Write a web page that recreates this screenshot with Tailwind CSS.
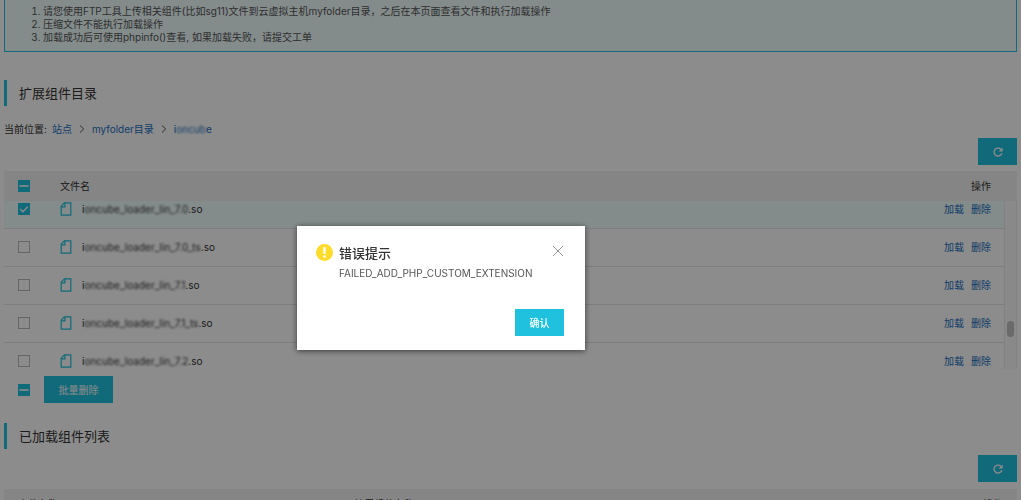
<!DOCTYPE html>
<html lang="zh-CN">
<head>
<meta charset="utf-8">
<meta name="viewport" content="width=device-width, initial-scale=1">
<title>扩展组件目录</title>
<script src="https://cdn.jsdelivr.net/npm/@tailwindcss/browser@4"></script>
</head>
<body class="h-screen overflow-hidden bg-white font-['Inter','Noto_Sans_CJK_SC',sans-serif] text-[10px] leading-[14px] text-[#333]">
<svg class="hidden" aria-hidden="true">
  <symbol id="file" viewBox="0 0 12 14"><path d="M4.4 .8H10.8v12.4H1.2V4.2z" fill="none" stroke="currentColor" stroke-width="1.2"/><path d="M4.9 .8v4H1.2" fill="none" stroke="currentColor" stroke-width="1.2"/></symbol>
  <symbol id="refresh" viewBox="0 0 10 10"><path d="M8.9 6.2A4 4 0 1 1 7.9 2.2" fill="none" stroke="currentColor" stroke-width="1.3"/><path d="M9.6 .6v4H5.6z" fill="currentColor"/></symbol>
  <symbol id="dash" viewBox="0 0 12 12"><path d="M1.5 6h9" fill="none" stroke="currentColor" stroke-width="1.6"/></symbol>
  <symbol id="tick" viewBox="0 0 12 12"><path d="M2.3 6l2.6 2.7 4.8-5" fill="none" stroke="currentColor" stroke-width="1.3"/></symbol>
  <symbol id="next" viewBox="0 0 6 8"><path d="M1 .5L4.7 4 1 7.5" fill="none" stroke="currentColor" stroke-width="1"/></symbol>
</svg>

<main class="px-1">
  <section class="border border-t-0 border-[#1fc1de] bg-[#f0fdfd] pt-[5px] pb-[7px]">
    <ol class="list-decimal pl-[38px] leading-[13px] text-[#555]">
      <li>请您使用FTP工具上传相关组件(比如sg11)文件到云虚拟主机myfolder目录，之后在本页面查看文件和执行加载操作</li>
      <li>压缩文件不能执行加载操作</li>
      <li>加载成功后可使用phpinfo()查看, 如果加载失败，请提交工单</li>
    </ol>
  </section>

  <h2 class="mt-[28px] flex h-[26px] items-center border-l-3 border-[#1fc1de] pl-3 text-[13px]">扩展组件目录</h2>
  <nav class="mt-4 flex items-center" aria-label="当前位置">
    <span>当前位置:</span>
    <a href="#" class="ml-[5px] text-[#1a6fc0]">站点</a>
    <svg class="mx-[7px] h-2 w-[6px] text-[#555]"><use href="#next"/></svg>
    <a href="#" class="text-[#1a6fc0]">myfolder目录</a>
    <svg class="mx-[7px] h-2 w-[6px] text-[#555]"><use href="#next"/></svg>
    <a href="#" class="flex text-[#1a6fc0]">i<span class="blur-[1px]">oncub</span>e</a>
  </nav>

  <div class="mt-[2px] flex justify-end">
    <button type="button" aria-label="刷新" class="grid h-[27px] w-[39px] place-items-center bg-[#1fc1de] text-white"><svg class="size-[10px]"><use href="#refresh"/></svg></button>
  </div>

  <div class="mt-[6px] flex h-[30px] items-center bg-[#f2f2f2] pr-[26px] pl-[14px]">
    <label class="grid"><input type="checkbox" aria-label="全选" class="col-start-1 row-start-1 size-3 appearance-none bg-[#1fc1de]"><svg class="pointer-events-none col-start-1 row-start-1 size-3 text-white"><use href="#dash"/></svg></label>
    <span class="ml-[30px] flex-1">文件名</span>
    <span>操作</span>
  </div>
  <div class="flex h-[168px] overflow-hidden">
    <div class="flex-1">
      <table class="-mt-[11px] w-full border-collapse" aria-label="文件列表">
        <tbody>
          <tr class="h-[38px] border-b border-[#e3e3e3] bg-[#f0fdfd]">
            <td class="w-14 pl-[14px]"><label class="grid"><input type="checkbox" checked aria-label="选择 7.0" class="col-start-1 row-start-1 size-3 appearance-none bg-[#1fc1de]"><svg class="pointer-events-none col-start-1 row-start-1 size-3 text-white"><use href="#tick"/></svg></label></td>
            <td><div class="flex items-center"><svg class="mr-[10px] h-[14px] w-3 text-[#1fc1de]"><use href="#file"/></svg>i<span class="blur-[1px]">oncube_loader_lin_7.0</span>.so</div></td>
            <td class="pr-[13px]"><div class="flex justify-end gap-[7px] text-[#1a6fc0]"><a href="#">加载</a><a href="#">删除</a></div></td>
          </tr>
          <tr class="h-[38px] border-b border-[#e3e3e3]">
            <td class="pl-[14px]"><input type="checkbox" aria-label="选择 7.0_ts" class="block size-3 appearance-none border border-[#bbb]"></td>
            <td><div class="flex items-center"><svg class="mr-[10px] h-[14px] w-3 text-[#1fc1de]"><use href="#file"/></svg>i<span class="blur-[1px]">oncube_loader_lin_7.0_ts</span>.so</div></td>
            <td class="pr-[13px]"><div class="flex justify-end gap-[7px] text-[#1a6fc0]"><a href="#">加载</a><a href="#">删除</a></div></td>
          </tr>
          <tr class="h-[38px] border-b border-[#e3e3e3]">
            <td class="pl-[14px]"><input type="checkbox" aria-label="选择 7.1" class="block size-3 appearance-none border border-[#bbb]"></td>
            <td><div class="flex items-center"><svg class="mr-[10px] h-[14px] w-3 text-[#1fc1de]"><use href="#file"/></svg>i<span class="blur-[1px]">oncube_loader_lin_7.1</span>.so</div></td>
            <td class="pr-[13px]"><div class="flex justify-end gap-[7px] text-[#1a6fc0]"><a href="#">加载</a><a href="#">删除</a></div></td>
          </tr>
          <tr class="h-[38px] border-b border-[#e3e3e3]">
            <td class="pl-[14px]"><input type="checkbox" aria-label="选择 7.1_ts" class="block size-3 appearance-none border border-[#bbb]"></td>
            <td><div class="flex items-center"><svg class="mr-[10px] h-[14px] w-3 text-[#1fc1de]"><use href="#file"/></svg>i<span class="blur-[1px]">oncube_loader_lin_7.1_ts</span>.so</div></td>
            <td class="pr-[13px]"><div class="flex justify-end gap-[7px] text-[#1a6fc0]"><a href="#">加载</a><a href="#">删除</a></div></td>
          </tr>
          <tr class="h-[38px]">
            <td class="pl-[14px]"><input type="checkbox" aria-label="选择 7.2" class="block size-3 appearance-none border border-[#bbb]"></td>
            <td><div class="flex items-center"><svg class="mr-[10px] h-[14px] w-3 text-[#1fc1de]"><use href="#file"/></svg>i<span class="blur-[1px]">oncube_loader_lin_7.2</span>.so</div></td>
            <td class="pr-[13px]"><div class="flex justify-end gap-[7px] text-[#1a6fc0]"><a href="#">加载</a><a href="#">删除</a></div></td>
          </tr>
        </tbody>
      </table>
    </div>
    <div class="flex w-[13px] justify-center border-x border-[#ececec] bg-[#fafafa] pt-[120px]"><div class="h-4 w-[7px] rounded-full bg-[#c1c1c1]"></div></div>
  </div>

  <div class="mt-[7px] flex items-center pl-[14px]">
    <label class="grid"><input type="checkbox" aria-label="全选文件" class="col-start-1 row-start-1 size-3 appearance-none bg-[#1fc1de]"><svg class="pointer-events-none col-start-1 row-start-1 size-3 text-white"><use href="#dash"/></svg></label>
    <button type="button" class="ml-[14px] h-[27px] w-[69px] bg-[#1fc1de] text-white">批量删除</button>
  </div>

  <h2 class="mt-[20px] flex h-[26px] items-center border-l-3 border-[#1fc1de] pl-3 text-[13px]">已加载组件列表</h2>
  <div class="mt-[6px] flex justify-end">
    <button type="button" aria-label="刷新列表" class="grid h-[27px] w-[39px] place-items-center bg-[#1fc1de] text-white"><svg class="size-[10px]"><use href="#refresh"/></svg></button>
  </div>
  <div class="mt-[7px] grid h-[30px] grid-cols-3 items-center bg-[#f2f2f2] pr-[14px] pl-[14px]">
    <span>文件名称</span><span class="pl-2">扩展组件名称</span><span class="text-right">操作</span>
  </div>
</main>

<div class="fixed inset-0 flex items-center justify-center bg-black/45 pr-[139px]">
  <section role="alertdialog" aria-labelledby="title" aria-describedby="message" class="mt-[76px] w-[288px] bg-white pt-[18px] pr-[21px] pb-[14px] pl-[19px] shadow-[0_1px_6px_rgba(0,0,0,0.6)]">
    <div class="flex">
      <svg class="mr-[6px] size-[17px] shrink-0" viewBox="0 0 17 17"><circle cx="8.5" cy="8.5" r="8.5" fill="#ffdb2c"/><path d="M7.2 3.3h2.6L9.5 10H7.5z" fill="#fff"/><circle cx="8.5" cy="12.5" r="1.3" fill="#fff"/></svg>
      <h2 id="title" class="flex-1 text-[13px] leading-[18px] font-medium">错误提示</h2>
      <button type="button" aria-label="关闭" class="mt-[1px] size-3"><svg viewBox="0 0 12 12" class="size-3"><path d="M1 1l10 10M11 1L1 11" stroke="#999" fill="none"/></svg></button>
    </div>
    <p id="message" class="mt-1 pl-[23px] text-[#555]">FAILED_ADD_PHP_CUSTOM_EXTENSION</p>
    <div class="mt-[29px] flex justify-end"><button type="button" class="h-[27px] w-[49px] bg-[#1fc1de] font-medium text-white">确认</button></div>
  </section>
</div>
</body>
</html>
